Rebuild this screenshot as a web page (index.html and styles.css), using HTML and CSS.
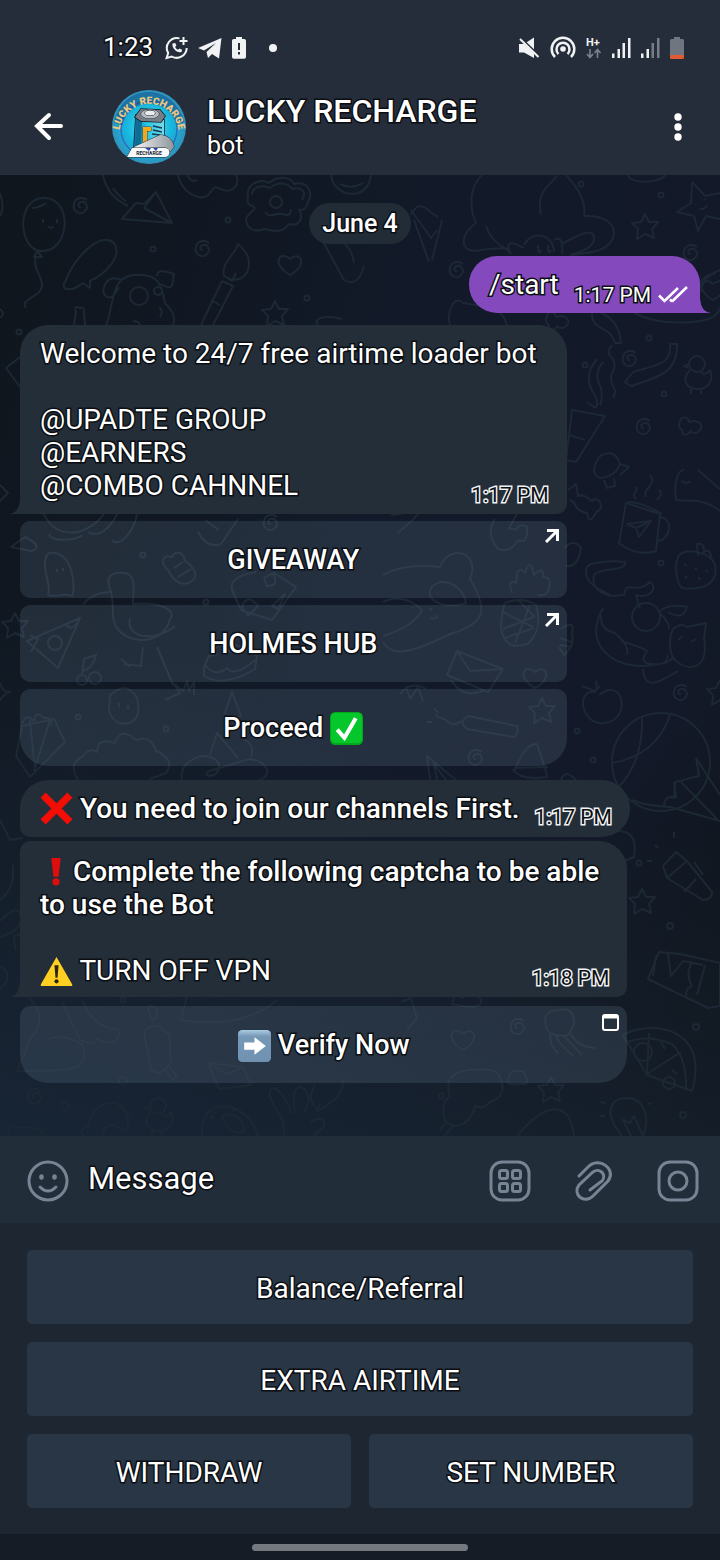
FILE: index.html
```
<!DOCTYPE html>
<html lang="en">

<head>
    <meta charset="UTF-8">
    <meta name="viewport" content="width=device-width, initial-scale=1.0">
    <title>LUCKY RECHARGE</title>
    <link rel="stylesheet" href="styles.css">
</head>

<body>

    <header>
        <div class="status-bar">
            <div class="status-left">
                <span class="clock">1:23</span>
                <svg width="24" height="24" viewBox="0 0 24 24" fill="none" stroke="#f0f2f4" stroke-width="2">
                    <path d="M14.5 2.4A10 10 0 0 0 3.2 17L1.6 22l5.2-1.5A10 10 0 0 0 21.7 12" />
                    <path d="M18.5 1v8M14.5 5h8" />
                    <path d="M7.5 7.5c-1 4.5 4.5 10 9 8.5l.6-2.2-2.7-1.3-1.3 1.2c-1.3-.5-2.3-1.5-2.9-2.8l1.2-1.3-1.2-2.7z" fill="#f0f2f4" stroke="none" />
                </svg>
                <svg width="24" height="22" viewBox="0 0 24 22" fill="#f0f2f4">
                    <path d="M0 11 23.5 1 21 21.5 14 17l-4 4-1.5-6L18 6 6 13.5z" />
                </svg>
                <svg width="16" height="22" viewBox="0 0 16 22">
                    <path d="M5 0h6v2h2.5A1.8 1.8 0 0 1 15 4v16a1.8 1.8 0 0 1-1.8 1.8H2.8A1.8 1.8 0 0 1 1 20V4a1.8 1.8 0 0 1 1.5-2H5z" fill="#f0f2f4" />
                    <path d="M7 6h2v7H7zM7 15h2v2.5H7z" fill="#262d3a" />
                </svg>
                <span class="dot"></span>
            </div>
            <div class="status-right">
                <svg width="22" height="22" viewBox="0 0 22 22" fill="#f0f2f4">
                    <path d="M1 7h5l10-6.5V21L6 15.500H1z" />
                    <path d="M1 0l21 20" stroke="#262d3a" stroke-width="3" />
                    <path d="M2 2l18.500 18" stroke="#f0f2f4" stroke-width="2" />
                </svg>
                <svg width="26" height="24" viewBox="0 0 26 24" fill="none" stroke="#f0f2f4" stroke-width="2.5">
                    <circle cx="13" cy="13" r="2.8" fill="#f0f2f4" stroke="none" />
                    <path d="M8.5 18a6.5 6.5 0 1 1 9 0" />
                    <path d="M5 21a11.3 11.3 0 1 1 16 0" />
                </svg>
                <svg class="network" width="16" height="22" viewBox="0 0 16 22">
                    <text x="0" y="9">H+</text>
                    <path d="M4 12v8M1 17l3 3.500L7 17M11.5 21v-8M8.5 16l3-3.500 3 3.500" fill="none" stroke="#7b818a" stroke-width="1.6" />
                </svg>
                <svg width="19" height="20" viewBox="0 0 19 20" fill="#f0f2f4">
                    <path d="M0 15.500h2.500V20H0zM5.500 11H8v9H5.500zM10.500 5H13v15h-2.500zM16 0h2.500v20H16z" />
                </svg>
                <svg width="19" height="20" viewBox="0 0 19 20" fill="#f0f2f4">
                    <path d="M0 15.500h2.500V20H0zM5.500 11H8v9H5.500z" />
                    <path d="M10.500 5H13v15h-2.500zM16 0h2.500v20H16z" fill="#777d86" />
                </svg>
                <svg width="14" height="22" viewBox="0 0 14 22">
                    <path d="M4 0h6v2h2.500A1.500 1.500 0 0 1 14 3.500V18H0V3.500A1.500 1.500 0 0 1 1.500 2H4z" fill="#6f7680" />
                    <path d="M0 18h14v2.500a1.500 1.500 0 0 1-1.500 1.500h-11A1.500 1.500 0 0 1 0 20.500z" fill="#e05a33" />
                </svg>
            </div>
        </div>

        <div class="chat-header">
            <button class="icon-button back" aria-label="Back">
                <svg width="30" height="30" viewBox="0 0 30 30" fill="none" stroke="#fff" stroke-width="4" stroke-linecap="round">
                    <path d="M27 14H4M15 3 3 14l12 12" />
                </svg>
            </button>
            <svg class="avatar" width="74" height="74" viewBox="0 0 74 74">
                <defs>
                    <radialGradient id="sky">
                        <stop offset="0" stop-color="#45e4f7" />
                        <stop offset=".65" stop-color="#16b4dc" />
                        <stop offset="1" stop-color="#2f93bd" />
                    </radialGradient>
                    <linearGradient id="can" x1="0" x2="1">
                        <stop offset="0" stop-color="#127fa8" />
                        <stop offset=".45" stop-color="#27c7e6" />
                        <stop offset="1" stop-color="#78d8e8" />
                    </linearGradient>
                    <linearGradient id="paper" x1="0" x2="1">
                        <stop offset="0" stop-color="#fff" />
                        <stop offset="1" stop-color="#8f969d" />
                    </linearGradient>
                    <path id="arc" d="M8 38A29.500 29.500 0 0 1 66 38" />
                </defs>
                <circle cx="37" cy="37" r="37" fill="url(#sky)" />
                <circle cx="37" cy="39" r="28" fill="none" stroke="#2d6fc0" stroke-width="1.5" />
                <path d="M2 32C8 10 22 2 37 2s30 10 35 30l-7 3C60 20 50 14 37 14S14 21 10 36z" fill="#123c78" opacity=".45" />
                <text class="logo-name"><textPath href="#arc" startOffset="50%">LUCKY RECHARGE</textPath></text>
                <path d="M24 25l28 5v29l-30-2z" fill="url(#can)" stroke="#101c2c" stroke-width="1.5" />
                <path d="M24 26l6 5-1 27-6-1z" fill="#0e6d94" />
                <path d="M23 27l6-8 19 1 5 6-4 6-20-1z" fill="#777f86" stroke="#111820" stroke-width="1.5" />
                <ellipse cx="38" cy="24" rx="9" ry="4.5" fill="#b7bdc2" stroke="#1a2027" />
                <ellipse cx="38" cy="23" rx="5" ry="2.5" fill="#e9edf0" stroke="#1a2027" />
                <path d="M31 52V37h8v4h-4v11z" fill="#f5a71c" stroke="#4a3010" stroke-width=".8" />
                <path d="M41 36l9 2M41 40l9 2M40 44l8 1" stroke="#103a55" stroke-width="1.3" />
                <path d="M22 57l26-12c8 0 13 5 14 12l-7 9H17z" fill="url(#paper)" stroke="#20262c" />
                <path d="M20 58h33a4 4 0 0 1 0 9H15z" fill="#f6f8fa" stroke="#20262c" />
                <path d="M33 58h6l-2 3zM41 58h5l-2 3z" fill="#2745a8" />
                <text class="logo-tag" x="37" y="65">RECHARGE</text>
            </svg>
            <div class="chat-title">
                <h1>LUCKY RECHARGE</h1>
                <p>bot</p>
            </div>
            <button class="icon-button menu" aria-label="More options">
                <svg width="8" height="28" viewBox="0 0 8 28" fill="#fff">
                    <circle cx="4" cy="4" r="3.7" />
                    <circle cx="4" cy="14" r="3.7" />
                    <circle cx="4" cy="24" r="3.7" />
                </svg>
            </button>
        </div>
    </header>

    <main class="chat">
        <svg class="wallpaper" viewBox="0 175 720 961" preserveAspectRatio="xMidYMin slice" aria-hidden="true">
            <defs>
                <path id="swirl" d="M1 1c-3 1-4-4 0-5 5-1 8 5 4 9-5 5-13 0-11-7 1-6 8-8 13-4" />
                <path id="star" d="M0-12 4-4 13-4 7 3 9 12 0 8-8 13-7 3-13-3-4-4z" />
                <path id="heart" d="M0 10C-20-2-10-15 0-6 10-15 19 0 0 10z" />
                <path id="bone" d="M-12-8c2-6 9-3 9 1 8-3 14 2 12 7-4 6-9 4-11 2-2 5-9 5-8-1-3-2-4-5-2-9z" />
                <g id="chick">
                    <circle cx="0" cy="-12" r="8" />
                    <path d="M-8-12l-5 2 5 2M-7-6c-8 8-5 18 6 19 13 1 18-10 14-19-4 6-8 4-9 1M-6 13v5M4 13v5" />
                </g>
            </defs>

            <!-- balloon, plane, clouds -->
            <path d="M44 198c-28 0-26 50-4 53 30 3 34-53 4-53zM37 251l-3 6h8zM36 257c-5 14 14 25 2 36-9 7-16 8-12 15M32 208q7 0 14-5M43 219v4M57 219v4M48 226q3 4 5 0" />
            <path d="M122 219l14-16 8 1 12-12 16 31zM156 192l-12 16M144 208l28 15M103 175q4 21 25 31M113 188q6 9 13 13" />
            <path d="M178 175c4 18 24 29 32 18 7-13 9 1 21-3 8-4 7-10 5-15M187 175q4 8 10 5" />
            <path d="M248 196c-2-12 12-18 21-13 10-8 22-6 25 1 12-3 20 6 14 18-2 8-5 8-9 8 5 8 0 17-10 14-9 12-20 5-25 5-12 5-18-3-18-10 3-8 12-9 7-13-6-1-6-5-5-10z" />
            <path d="M252 195c0-8 10-11 18-7 8-7 18-5 22 1 10-3 15 4 10 11M265 212c4 7 12 0 18 2 7 3 8-2 8-5" />
            <circle cx="276" cy="202" r="6" />
            <path d="M331 175c2 22 37 28 40 0M340 184q12 6 23-1" />
            <path d="M66 280c9-23 34-49 48-37 10 14-12 33-24 38v7l-7-5c-14 11-24 6-17-3z" />
            <path d="M106 326c9-26 5-49 28-51 27-3 28 14 31 28 15 15 11 29-7 24M121 280c-18-9-24 21-9 17q5-5 7-10M157 276c0-9 14-3 17-2-2 10 0 18-13 10M133 321q6 0 7 4M159 307q5 3 1 10" />
            <circle cx="139" cy="296" r="9" />
            <circle cx="158" cy="291" r="4" />
            <path d="M238 244c-3 11-17 18-14 32 12 8 25 2 25-13 0-9-6-14-11-19zM224 276l8 5 4-8M222 281l11 5-20 39M222 281l-21 44M211 300l9 5" />
            <path d="M320 236l24 44q14 8 20-14M334 240q17 2 20 23M318 325c-6-8 10-10 24-6M74 325l2-13q-3-7 4-4 5-2 4 5l1 12" />
            <path d="M482 175c-14 13-12 35-6 48-16 12-17 28 0 28 20-5 21-1 34-3M486 226c6 18 19 20 25 28M541 215c-5-24 8-29 16-39M566 175c16 17 20 30 18 41 39-2 38 31 8 36l-20 3M562 244c12-7 34-20 32-3-4 8-14 11-24 14M524 245c7-14 29-13 30 7M538 245q0 12 3 5M548 245q0 12 3 5M524 248q-22-12-13 6M554 240q10-6 8 14M627 175c7 10 30 8 39 0" />
            <path d="M692 182l13 14 15-3M692 182l-1 21-14 9 17 4 4 15 8-15 14 3M696 204v1M705 199v1M699 208q5 3 8-3M411 210l20 28 6-8" />
            <path d="M411 215q7-15 18-4l9 6M414 220l15 42M442 220l-10 40" />

            <!-- right column -->
            <path d="M720 270q-18 7-19 22M700 288c-3-6 6-13 16-15M634 313q23 12 58 9 25-2 28-14" />
            <path d="M450 325c-4-14 5-31 13-22l19 3q20 1 25 19M592 313c0 20 17 10 23 30h6q-2-23-20-30" />
            <path d="M612 345q-7 8 1 14 3 7 0 12-4 8 0 15 4 5 0 12M597 359q-16 18-1 38 3 12-2 10l-7-5M603 362q-10 12-2 26 2 10-1 17M670 344c2 20-12 21-37 28l-8 10 6 4c30-10 47-14 46-42z" />
            <use href="#chick" x="697" y="376" />
            <path d="M572 410l-6 50 10 2 29-46zM569 435l16 5" />
            <path d="M600 456q15-8 20 8-4 12-20 14-12-5 0-22zM620 464l9 3-9 8M604 480l3 8 8-2-1-8" />
            <path d="M626 503l34 11-4 37q-20 6-37-8zM626 503q10-4 36 11M660 517c15 2 10 24-3 24M636 499c-6-7 3-6 0-12M646 497c-5-8 13-13 4-22M657 500q7-7 2-10M627 524l24-3-12 16-3-9zM636 528l15-7" />
            <path d="M684 470c-8 0-10 18-8 30M676 500c14 2 26-3 44 11M698 470l22 19M682 481q4 4 8 0" />
            <path d="M568 490l8-6 2 12c9-4 14 10 16 3 9 0 8 13 3 12-6 12-9 10-10 2-14-2-10-12-17-13" />
            <path d="M679 555c9-8 33-2 36 10 4 22-17 25-33 23-6-5-8-25-3-33zM698 556l-1-12q7-2 7 8 6-4 7 5M684 564l3 2M695 568l2 2M685 576l2 2M706 570l2 2M698 578l3 1" />
            <path d="M612 596c-8-5-25-10-26-23-1-10 5-10 28-12l11 1c2 10-25 5-31 13-3 11 5 19 18 21M603 608c-22 38 13 63 49 57 10-1 17-2 22-8M612 596l12-1c3-17 11 1 26-13 8 5 1 17-14 13l4 13M601 615q-1 15 14 18 15 13 12 22M621 641q20 6 26 10-9 13 6 13 14 2 15-9M643 669c2 25 20 10 35 2" />
            <circle cx="646" cy="617" r="14" />
            <path d="M673 629c8-6 11-4 14-2l19-4-2 15c5 30-13 34-27 24-8-6-9-22-4-33M678 640l5-4M691 642l5-3M659 612q9-9 28-5-4 14-19 5M659 612q11 11 10 17" />
            <path d="M596 692c-22-3-14 34 8 31 28-2 20-48-5-28M582 686l13 5 5-5M597 690l-1-9" />
            <circle cx="661" cy="762" r="49" />
            <path d="M642 716q2 45-25 73M670 715q-13 40-58 48M696 758l3 18-24 6-1 17M696 758l24 37M681 782l36 37M632 800q14 6 38 7l50 14M664 807c1-12 5-10 12-10l-2-15" />
            <path d="M663 866l13-14 11 9-20 17zM687 861l25 31q0 8-9 8l-36-22M694 862l9 13M684 892l12-13M658 848l-3-3M674 838v-6M652 861h-5" />
            <path d="M612 832q27-5 22 25l-10 4" />
            <path d="M648 979l11-27 21 2 40 9v43l-12 2-60-29zM656 956l-3 20M668 954l3 22 12-15 20 4M692 962q-7 13 0 24-8 3-5 13M705 965l-8 30" />
            <path d="M623 1035c25-15 88-10 69 56l-45-16zM628 1042q19-8 44 2 15 15 14 44M649 1033l-2 41M647 1074l34-22M661 1042l4 7M672 1070l5 4" />
            <circle cx="643" cy="1052" r="9" />
            <circle cx="669" cy="1083" r="6" />
            <path d="M622 1136c-20-24-11-38 5-38s24 17 16 38M631 1136l-8-16 7 3 4-7 9 20M605 1103l-5-1M605 1116h-5M648 1104l4-1" />

            <!-- behind the message buttons -->
            <path d="M42 510q10 26 36 22 17-5 26-18M49 534c2 9 30 6 33 1M88 532c15 9 28-15 30-20M112 540c9 10 25-15 25-27M198 532q9 17 23 12l17-25M205 520l14 10" />
            <path d="M49 553c25-3 27 36 23 43-8-4-16 2-24-1 5-8-10-32 1-42zM57 569v3M63 568v3M11 547l14-10q20 10 6 14z" />
            <path d="M168 570c-9-8-5-16 4-13 4-8 12-4 13 4 7 4 13 13 9 18-10 10-20 3-26-9zM174 568l9-6M178 577l13-8" />
            <path d="M83 604c12-13 24-12 28-12-8-19 4-21 18-18 7 7 4 18 4 30 24-2 45 5 37 15-8 32-57 25-57-4q0-14-2-23M130 618c-5 20 25 25 45 8M143 647l-2 19-17-2M157 647l16 38M121 659l9 8" />
            <path d="M27 641l53-23-22 50zM30 635l8 4-7 13M78 622q-8 10-12 2" />
            <circle cx="55" cy="643" r="7" />
            <circle cx="82" cy="680" r="5" />
            <circle cx="95" cy="678" r="6" />
            <path d="M82 674l2-15 12-4q-3 13-13 16" />
            <path d="M233 592q-7-15 23-20M233 592l8 18 31 10 24-33-23-15M264 578l9-5q7 13-6 13zM242 607q5-15 16-1l-10 10zM272 606l13-12-7 15z" />
            <path d="M204 668q12-41 53-12l-2 13q-31 19-51 7zM205 665q10 13 22 3 7 10 28-8M210 656l8-2M227 650l5 2" />
            <path d="M110 695q17-15 27 3 5 20-8 25-14 4-20-12zM119 703v4M128 705v4M165 700l15-7-7-10 10 8 4-10 2 10 5-9v13M224 716l8-24 9 24q-10 4-17 0z" />
            <path d="M22 724q4-12 12-3 3-12 9-3 10-2 8 8M22 726l32-7 11 23-35 35-14-21 6-30zM30 720l5 51M50 720l-16 51" />
            <path d="M78 780q-10-17 4-23 7-10 15-5 0-15 18-9 6-17 21-3 15-5 20 11 20 9 10 22l-16 6M182 780c-5-20 28-33 37-16 2 16-20 13-10 7l40-12c20 2 25 17 8 22M210 755l7-22 21 25M245 740q10 5 6 17" />
            <path d="M383 575q20-12 57-8c10-25 41-14 30 12 20 33 14 45-20 55-48 24-60 20-67 8M430 591c4-15 32-11 36 12-20 7-39-2-36-12zM383 602q20-10 39 8-7 16-39 26M437 593v1M413 607v1M429 608l3 2M437 615q1 5-7 3" />
            <path d="M391 515q20 0 30-17-2-20 4 2-3 15-28 33M495 519q-10 14 3 30 12 5 20-9 10 5 9-13-8-4-11 3l-7-2 10-18" />
            <path d="M505 603q17-7 31 2 7 23-7 38-24 10-28-15 1-19 4-25zM503 612l30 15M518 600l17 17M503 629l31-12M505 638l29-10M515 643l15-38M512 593q-5-15 4-10 1-20 9-10 5-17 9 2 10-10 9 2 9 0 6 10-1 10-12 8" />
            <path d="M457 651l46 18-15 23-41-17zM457 651l13 20 33-2M451 680q12 20 34 10M400 694q12-14 26-5M406 686l4 13 8-12 5 14" />
            <path d="M468 716l49 10q2 8-3 11l-47-8q-9-7 1-13zM462 721q-11 7-17-2-6 0-10-5M438 713l-4-5M432 722h-5" />
            <path d="M430 780l-3-24 29 24M437 780l-3-16 12 16M515 770q10-27 22-26l8 24 2 9q-25 4-34-7zM514 768l34-1M561 780q4-12 15 0" />
            <path d="M561 629q15-10 11 4 3 13-8 22l-5-8M560 638l12 4M560 645l12 2M564 548q10-10 17 0-3 20-15 18" />

            <!-- edges and bottom -->
            <path d="M0 193q5 15 0 23M0 309q6 5 0 9M0 485l8 8-8 8M6 368l14-11M6 368l14 19M0 683q3 10 10 9-8 3-10 9M0 820l10 20 13-2M0 900q15-11 13-35M0 921q17-17 20-7 5 15-20 23M16 950q-6-20 6-14M0 966q9 4 7 15l-7 9" />
            <path d="M29 998q20 21 2 40l-14 33q22 0 48-1 27-4 17-26-20-11-33-5M62 1002l18 38 15 4M82 999q10 29 38 31-2 20-25 8" />
            <path d="M144 1033q10-16 25 2l2 27q-12 17-20 7zM165 1070l8 10 4-3-8-11M152 1020q-9-20 4-12 4 10-4 12zM181 1020l6-24M181 1020q60 10 96-20M208 1063l35 4 8 18-32 4zM208 1063l19 11 16-7" />
            <path d="M84 1136q-7-5 4-10 7-25 28-23 16 8 11 25-4 5-12-3-9-2-13 11M9 1136q0-13 10-8 20-3 26 8" />
            <use href="#chick" x="158" y="1118" />
            <path d="M202 1136q-2-33 30-29 20 8 26 29M222 1116q17-7 23 15-15 7-23-15zM210 1118l4-2M231 1110l4 1" />
            <path d="M285 1136l-3-17q-20-30-8-31 9 3 18 26M295 1113q-4-22 4-26 8 0 10 13l-5 13M310 1122q16-8 14 4l-10 10M318 1110q-12-11-3-25M343 1080c0 18-10 20-26 32l3-8" />
            <path d="M401 1002l10-4 6 20-10 12M452 1004q2-13 10-6 10-8 19 1 3 12-29 5zM546 1026q-4-15 12-16 17-4 16 15l-6 10q-20 3-22-9zM550 1035q0 12 8 18M556 1036q4 10 18 20M564 1036l18 19M571 1034q6 13 25 14" />
            <path d="M446 1122q-7-20 4-25-8-25 20-27 25-2 28 4 12 21-8 28-7 8-15 4-5 20-22 20zM508 1083q0-16 16-11 7 13-2 12-12 1-14-1M517 1136q34-40 51-20 5 8 6 20M446 1122l-6 8M452 1127l-8 9" />

            <use href="#swirl" x="80" y="206" />
            <use href="#swirl" x="202" y="249" />
            <use href="#swirl" x="456" y="270" />
            <use href="#swirl" x="690" y="253" />
            <use href="#swirl" x="629" y="359" />
            <use href="#swirl" x="643" y="427" />
            <use href="#swirl" x="270" y="523" />
            <use href="#swirl" x="680" y="693" />
            <use href="#swirl" x="475" y="758" />
            <use href="#swirl" x="517" y="1027" />
            <use href="#swirl" x="34" y="1097" />
            <use href="#star" x="645" y="226" />
            <use href="#star" x="275" y="313" />
            <use href="#star" x="15" y="625" />
            <use href="#star" x="542" y="710" />
            <use href="#star" x="642" y="901" />
            <use href="#star" x="551" y="1089" />
            <use href="#star" x="720" y="692" />
            <use href="#heart" x="290" y="265" />
            <use href="#heart" x="535" y="678" />
            <use href="#heart" x="463" y="1040" />
            <use href="#heart" x="713" y="290" />
            <use href="#bone" x="559" y="324" />
            <use href="#bone" x="692" y="429" />
            <g class="bubbles">
                <circle cx="153" cy="249" r="2.5" />
                <circle cx="228" cy="220" r="2.5" />
                <circle cx="307" cy="298" r="2.5" />
                <circle cx="19" cy="332" r="2.5" />
                <circle cx="581" cy="184" r="2.5" />
                <circle cx="661" cy="195" r="2.5" />
                <circle cx="649" cy="338" r="2.5" />
                <circle cx="585" cy="365" r="2.5" />
                <circle cx="664" cy="394" r="2.5" />
                <circle cx="661" cy="563" r="2.5" />
                <circle cx="143" cy="555" r="2.5" />
                <circle cx="206" cy="602" r="2.5" />
                <circle cx="78" cy="717" r="2.5" />
                <circle cx="166" cy="729" r="2.5" />
                <circle cx="577" cy="731" r="2.5" />
                <circle cx="593" cy="760" r="2.5" />
                <circle cx="639" cy="863" r="2.5" />
                <circle cx="670" cy="926" r="3" />
                <circle cx="696" cy="1027" r="3" />
                <circle cx="123" cy="1000" r="2.5" />
                <circle cx="123" cy="1081" r="4" />
                <circle cx="65" cy="1106" r="3.5" />
                <circle cx="441" cy="1096" r="2.5" />
                <circle cx="683" cy="1115" r="3" />
            </g>
        </svg>

        <div class="date">June 4</div>

        <div class="bubble sent">
            <p>/start</p>
            <time>1:17 PM</time>
            <svg class="ticks" width="30" height="18" viewBox="0 0 30 18" fill="none" stroke="#fff" stroke-width="2.5">
                <path d="M1 9.500 6.500 15 20 2M14 15.500 29 1M14 15.500l-2-2" />
            </svg>
        </div>

        <section class="message">
            <div class="bubble received tail">
                <p>Welcome to 24/7 free airtime loader bot<br><br><a href="#">@UPADTE GROUP</a><br><a href="#">@EARNERS</a><br><a href="#">@COMBO CAHNNEL</a></p>
                <time>1:17 PM</time>
            </div>
            <div class="inline-buttons">
                <a class="inline-button" href="#">GIVEAWAY
                    <svg class="corner" width="14" height="14" viewBox="0 0 14 14" fill="none" stroke="#fff" stroke-width="3">
                        <path d="M2 1.500h10.500V12M12 2 1 13" />
                    </svg>
                </a>
                <a class="inline-button" href="#">HOLMES HUB
                    <svg class="corner" width="14" height="14" viewBox="0 0 14 14" fill="none" stroke="#fff" stroke-width="3">
                        <path d="M2 1.500h10.500V12M12 2 1 13" />
                    </svg>
                </a>
                <button class="inline-button">Proceed
                    <svg class="emoji" viewBox="0 0 32 32">
                        <rect width="32" height="32" rx="5" fill="#00a91c" />
                        <rect x="1" y="1" width="30" height="29" rx="4" fill="#05c62a" />
                        <path d="M7 17l7 8L25 6" fill="none" stroke="#fff" stroke-width="4" />
                    </svg>
                </button>
            </div>
        </section>

        <div class="bubble received middle">
            <p><svg class="emoji" viewBox="0 0 32 32">
                    <path d="M3 3l26 26M29 3 3 29" stroke="#f20d05" stroke-width="7" />
                </svg> <strong>You need to join our channels First.</strong></p>
            <time>1:17 PM</time>
        </div>

        <section class="message last">
            <div class="bubble received tail bottom">
                <p><svg class="emoji" viewBox="0 0 32 32">
                        <path d="M11 3h9l-2 18h-5z" fill="#e00d0d" />
                        <circle cx="15.5" cy="26" r="3.5" fill="#e00d0d" />
                    </svg><strong>Complete the following captcha to be able<br>to use the Bot</strong><br><br><svg class="emoji" viewBox="0 0 32 32">
                        <path d="M16 3 31 29q1 2-1 2H2q-2 0-1-2z" fill="#ffcf22" />
                        <path d="M14 11h4l-1 12h-2z" fill="#2b2412" />
                        <circle cx="16" cy="26.5" r="2" fill="#2b2412" />
                    </svg> TURN OFF VPN</p>
                <time>1:18 PM</time>
            </div>
            <div class="inline-buttons">
                <button class="inline-button">
                    <svg class="emoji" viewBox="0 0 32 32">
                        <defs>
                            <linearGradient id="tile" y1="0" y2="1" x2="0">
                                <stop offset="0" stop-color="#a9cbe2" />
                                <stop offset=".2" stop-color="#7799b8" />
                                <stop offset="1" stop-color="#7091b0" />
                            </linearGradient>
                        </defs>
                        <rect y="1" width="32" height="31" rx="4" fill="url(#tile)" />
                        <path d="M6 13h10V8l11 8.500L16 25v-5H6z" fill="#fff" />
                    </svg>
                    Verify Now
                    <svg class="corner" width="17" height="17" viewBox="0 0 17 17" fill="none" stroke="#fff">
                        <rect x="1" y="1" width="15" height="15" rx="2" stroke-width="2" />
                        <path d="M1 3h15" stroke-width="3" />
                    </svg>
                </button>
            </div>
        </section>
    </main>

    <form class="composer">
        <button type="button" class="icon-button" aria-label="Emoji">
            <svg width="42" height="42" viewBox="0 0 42 42" fill="none" stroke="#768494" stroke-width="3" stroke-linecap="round">
                <circle cx="21" cy="21" r="19" />
                <path d="M13 27q8 8 16 0" />
                <ellipse cx="14.500" cy="17" rx="1.3" ry="1.8" fill="#768494" stroke-width="2" />
                <ellipse cx="27.500" cy="17" rx="1.3" ry="1.8" fill="#768494" stroke-width="2" />
            </svg>
        </button>
        <input type="text" placeholder="Message" aria-label="Message">
        <button type="button" class="icon-button" aria-label="Bot keyboard">
            <svg width="42" height="42" viewBox="0 0 42 42" fill="none" stroke="#768494" stroke-width="3">
                <rect x="2" y="2" width="38" height="38" rx="11" />
                <rect x="10.500" y="10.500" width="8" height="8" rx="2" />
                <rect x="23.500" y="10.500" width="8" height="8" rx="2" />
                <rect x="10.500" y="23.500" width="8" height="8" rx="2" />
                <rect x="23.500" y="23.500" width="8" height="8" rx="2" />
            </svg>
        </button>
        <button type="button" class="icon-button" aria-label="Attach file">
            <svg width="42" height="42" viewBox="0 0 42 42" fill="none" stroke="#768494" stroke-width="3" stroke-linecap="round">
                <path d="M6 16 15 7C26-4 44 9 35 21L20 36C11 45-1 34 6 25L20 12c7-5 14 3 9 9L17 30" />
            </svg>
        </button>
        <button type="button" class="icon-button" aria-label="Record video">
            <svg width="42" height="42" viewBox="0 0 42 42" fill="none" stroke="#768494" stroke-width="3">
                <rect x="2" y="2" width="38" height="38" rx="11" />
                <circle cx="21" cy="21" r="9" />
            </svg>
        </button>
    </form>

    <div class="keyboard">
        <button class="wide">Balance/Referral</button>
        <button class="wide">EXTRA AIRTIME</button>
        <button>WITHDRAW</button>
        <button>SET NUMBER</button>
    </div>

    <footer>
        <div class="handle"></div>
    </footer>

</body>

</html>
```
FILE: styles.css
```
* {
    margin: 0;
    padding: 0;
    box-sizing: border-box;
}

body {
    min-height: 100vh;
    display: flex;
    flex-direction: column;
    background-color: #1e2731;
    color: #fff;
    font-family: Roboto, "Noto Sans", sans-serif;
    font-size: 28px;
    line-height: 33px;
    -webkit-text-stroke: 3px #0b0e12;
    paint-order: stroke fill;
}

button,
input {
    font: inherit;
    color: inherit;
    border: none;
    background: none;
    -webkit-text-stroke: inherit;
    paint-order: inherit;
}

button {
    cursor: pointer;
}

a {
    color: inherit;
    text-decoration: none;
}

strong {
    font-weight: 500;
}

svg {
    display: block;
    flex-shrink: 0;
}

/* status bar and header */
header {
    background-color: #262d3a;
}

.status-bar {
    display: flex;
    justify-content: space-between;
    padding: 31px 36px 0 103px;
}

.status-left,
.status-right {
    display: flex;
    align-items: center;
}

.status-left {
    gap: 9px;
}

.status-right {
    gap: 10px;
}

.clock {
    font-size: 26px;
    margin-right: 3px;
}

.dot {
    width: 8px;
    height: 8px;
    margin-left: 13px;
    border-radius: 50%;
    background-color: #f0f2f4;
}

.network text {
    font-size: 11px;
    font-weight: 700;
    fill: #f0f2f4;
    -webkit-text-stroke: 0;
}

.chat-header {
    display: flex;
    align-items: center;
    padding: 26px 38px 11px 34px;
}

.icon-button {
    display: flex;
    align-items: center;
    justify-content: center;
}

.avatar {
    margin-left: 48px;
}

.logo-name {
    font-size: 10px;
    font-weight: 900;
    text-anchor: middle;
    fill: #f1c77c;
    -webkit-text-stroke: 2px #10234f;
}

.logo-tag {
    font-size: 5px;
    font-weight: 700;
    text-anchor: middle;
    fill: #16202c;
    -webkit-text-stroke: 0;
}

.chat-title {
    flex: 1;
    margin-left: 21px;
}

.chat-title h1 {
    font-size: 32px;
    font-weight: 500;
    line-height: 36px;
}

.chat-title p {
    font-size: 25px;
}

/* chat */
.chat {
    position: relative;
    z-index: 0;
    flex: 1;
    display: flex;
    flex-direction: column;
    align-items: flex-start;
    padding: 28px 20px 52px;
    background: linear-gradient(105deg, #0f161d 0%, #121928 45%, #131929 80%, #111822 100%);
    overflow: hidden;
}

.chat::before {
    content: "";
    position: absolute;
    inset: 0;
    z-index: -2;
    background: linear-gradient(20deg, #182534 0%, rgba(24, 37, 52, 0) 45%),
        linear-gradient(325deg, #0f141a 0%, rgba(15, 20, 26, 0) 30%);
}

.wallpaper {
    position: absolute;
    inset: 0;
    z-index: -1;
    width: 100%;
    height: 100%;
    fill: none;
    stroke: #1d2835;
    stroke-width: 2;
    stroke-linejoin: round;
}

.date {
    align-self: center;
    padding: 4px 13px;
    border-radius: 21px;
    background-color: #212c37;
    font-size: 25px;
    font-weight: 500;
}

.bubble {
    position: relative;
    display: flex;
    align-items: flex-end;
    justify-content: space-between;
    width: fit-content;
    padding: 12px 18px 7px 20px;
}

.bubble p {
    padding-right: 15px;
    margin-bottom: 5px;
}

.bubble time {
    font-size: 21px;
    line-height: 25px;
    white-space: nowrap;
}

.received {
    background-color: #232e39;
}

.received time {
    color: #0b0e12;
    -webkit-text-stroke: 3px #f2f3f4;
}

.sent {
    align-self: flex-end;
    margin: 12px 0;
    padding-right: 12px;
    border-radius: 28px 28px 0 28px;
    background-color: #8549be;
}

.sent time {
    line-height: 22px;
}

.ticks {
    margin: 0 0 2px 7px;
}

/* the little hook in the lower corner of a bubble */
.sent::after,
.tail::before {
    content: "";
    position: absolute;
    bottom: 0;
    width: 10px;
    height: 14px;
}

.sent::after {
    left: 100%;
    background: radial-gradient(farthest-side at 100% 0, transparent 94%, #8549be 100%);
}

.tail::before {
    right: 100%;
    background: radial-gradient(farthest-side at 0 0, transparent 94%, #232e39 100%);
}

.tail {
    border-radius: 28px 28px 10px 0;
}

.tail p {
    padding-right: 12px;
}

.tail time {
    position: absolute;
    right: 18px;
    bottom: 6px;
}

.middle {
    margin: 14px 0 4px;
    border-radius: 28px 28px 28px 10px;
}

.bottom {
    padding-top: 14px;
    padding-bottom: 5px;
    border-radius: 10px 28px 10px 0;
}

.bottom p {
    padding-right: 10px;
}

.message {
    display: flex;
    flex-direction: column;
    gap: 7px;
}

.message.last {
    gap: 9px;
}

.inline-buttons {
    display: flex;
    flex-direction: column;
    gap: 7px;
}

.inline-button {
    position: relative;
    display: flex;
    align-items: center;
    justify-content: center;
    gap: 7px;
    height: 77px;
    padding-top: 2px;
    border-radius: 10px;
    background-color: rgba(120, 150, 170, 0.18);
    font-size: 27px;
    font-weight: 500;
}

.inline-button:last-child {
    border-radius: 10px 10px 28px 28px;
}

.corner {
    position: absolute;
    top: 8px;
    right: 8px;
}

.emoji {
    display: inline-block;
    width: 33px;
    height: 33px;
    vertical-align: bottom;
}

/* message field */
.composer {
    display: flex;
    align-items: center;
    gap: 42px;
    padding: 23px 21px 20px 27px;
    background-color: #222d3a;
}

.composer input {
    flex: 1;
    min-width: 0;
    height: 44px;
    margin-left: -23px;
    padding-bottom: 5px;
    font-size: 31px;
    outline: none;
}

.composer input::placeholder {
    color: #fff;
    opacity: 1;
}

/* bot keyboard */
.keyboard {
    display: grid;
    grid-template-columns: 1fr 1fr;
    gap: 18px;
    padding: 27px 27px 26px;
}

.keyboard button {
    height: 74px;
    padding-top: 2px;
    border-radius: 5px;
    background-color: #293645;
}

.keyboard .wide {
    grid-column: span 2;
}

footer {
    display: flex;
    justify-content: center;
    padding: 10px 0 9px;
    background-color: #151c25;
}

.handle {
    width: 30%;
    height: 7px;
    border-radius: 4px;
    background-color: #74797f;
}
```
